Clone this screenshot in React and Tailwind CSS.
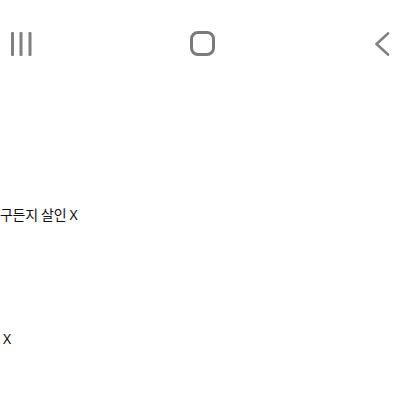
import React from 'react';

function NavBar() {
  return (
    <div className="flex items-center justify-between h-[25px] pl-[11px] pr-[10px]">
      <svg width="22" height="24" viewBox="0 0 22 24" className="text-[#808080]">
        <rect x="0" y="0" width="3" height="24" rx="1" fill="currentColor" />
        <rect x="8.5" y="0" width="3" height="24" rx="1" fill="currentColor" />
        <rect x="17.5" y="0" width="3" height="24" rx="1" fill="currentColor" />
      </svg>
      <div className="w-[25px] h-[25px] rounded-[8px] border-[3px] border-[#7a7a7a] -ml-[3px]" />
      <svg width="16" height="24" viewBox="0 0 16 24" className="text-[#808080]">
        <path d="M14 1.5 L2.5 12 L14 22.5" fill="none" stroke="currentColor" strokeWidth="2.6" strokeLinecap="round" strokeLinejoin="round" />
      </svg>
    </div>
  );
}

export default function App() {
  return (
    <div className="w-[400px] h-[400px] bg-white overflow-hidden pt-[31px]" style={{ fontFamily: '"Noto Sans", "Noto Sans CJK KR", sans-serif' }}>
      <NavBar />
      <div className="mt-[149px] text-[14px] leading-[20px] text-[#111] tracking-[-0.3px]">
        구든지 살인 X
      </div>
      <div className="mt-[104px] pl-[3px] text-[14px] leading-[20px] text-[#111]">
        X
      </div>
    </div>
  );
}
